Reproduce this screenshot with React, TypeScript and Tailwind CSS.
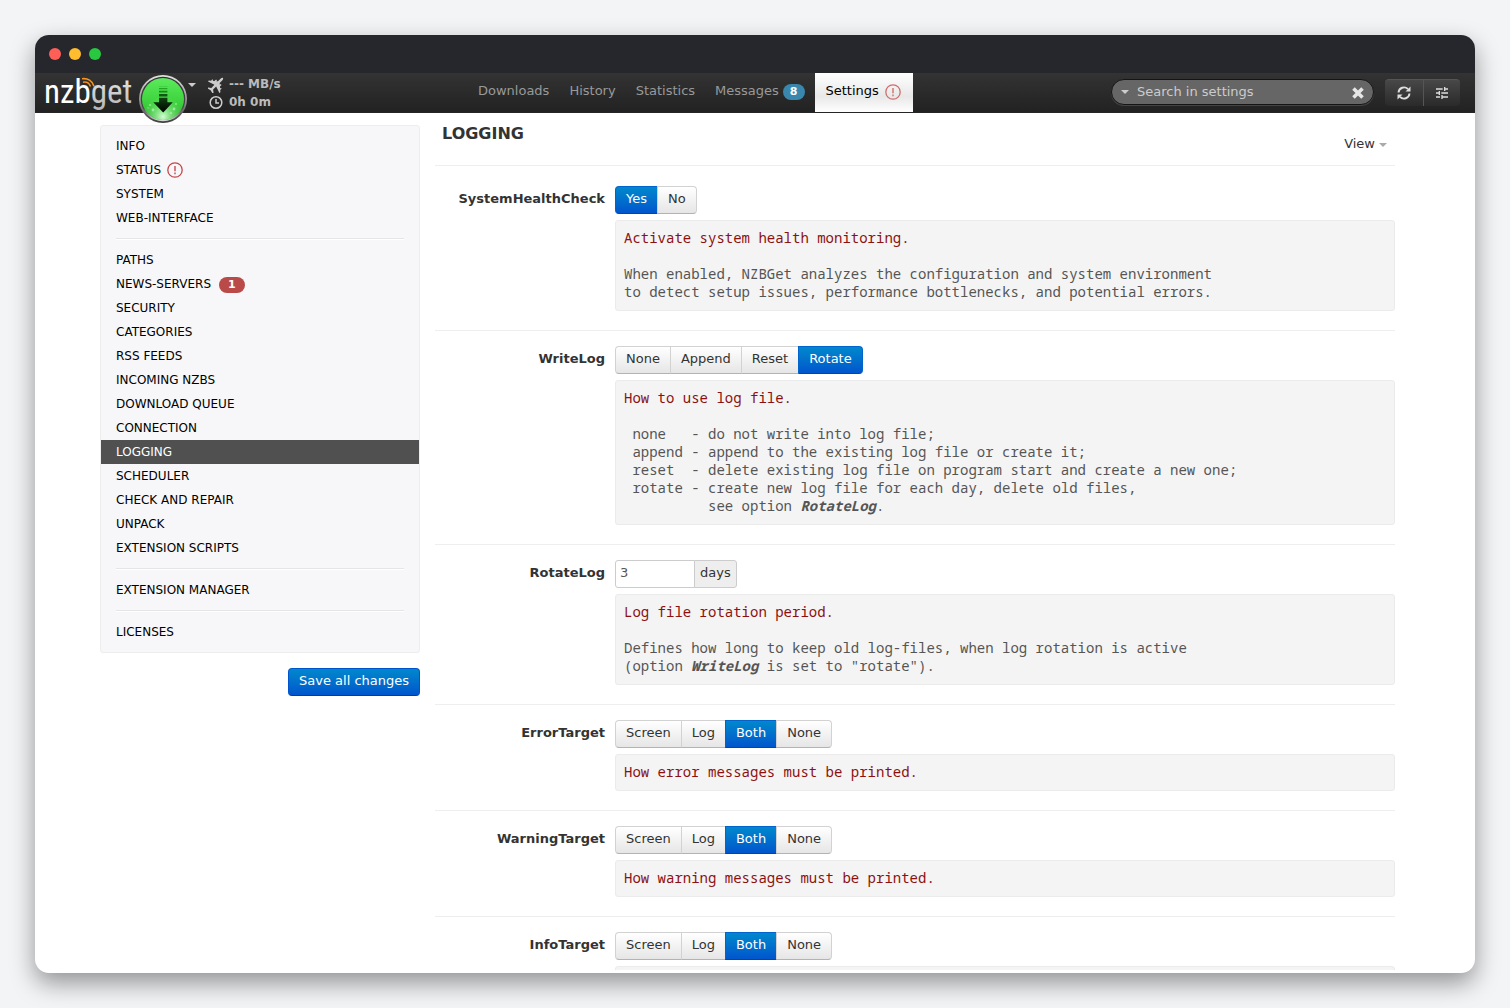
import { ReactNode } from "react";
import { MdTune } from "react-icons/md";

function Warn({ className, faded }: { className?: string; faded?: boolean }) {
  return (
    <svg viewBox="0 0 16 16" className={"size-4 shrink-0 " + (className ?? "")} fill="none" stroke={faded ? "#cf6d6b" : "#c4474a"} aria-label="Warning">
      <circle cx="8" cy="8" r="7.2" strokeWidth="1.3" />
      <path d="M8 4v5.2M8 10.6v1.6" strokeWidth="1.4" />
    </svg>
  );
}

function Caret({ className }: { className?: string }) {
  return (
    <svg viewBox="0 0 8 4" className={"h-1 w-2 shrink-0 " + (className ?? "")} fill="currentColor" aria-hidden="true">
      <path d="M0 0h8L4 4z" />
    </svg>
  );
}

function Logo() {
  return (
    <svg viewBox="0 0 92 40" className="h-10 w-[92px] shrink-0" role="img" aria-label="nzbget">
      <defs>
        <linearGradient id="get" x1="0" y1="0" x2="0" y2="1">
          <stop offset="0" stopColor="#ededed" />
          <stop offset="1" stopColor="#b4b4b4" />
        </linearGradient>
      </defs>
      <text x="-1" y="30" fontFamily="'Roboto Condensed', Roboto, sans-serif" fontSize="33">
        <tspan fill="#fff">nzb</tspan>
        <tspan fill="url(#get)">get</tspan>
      </text>
      <g fill="none" stroke="#f7941d" strokeWidth="1.6">
        <path d="M37 5.800C42.500 4.800 47.500 8 49 13.200" />
        <path d="M38 9.200C41.500 8.600 44.500 10.500 45.500 13.600" />
      </g>
    </svg>
  );
}

function DownloadOrb() {
  return (
    <svg viewBox="0 0 48 48" className="size-12" aria-hidden="true">
      <defs>
        <linearGradient id="rim" x1="0" y1="0" x2="0" y2="1">
          <stop offset="0" stopColor="#e2e2e2" />
          <stop offset="0.5" stopColor="#9a9a9a" />
          <stop offset="1" stopColor="#3c3c3c" />
        </linearGradient>
        <linearGradient id="inner" x1="0" y1="0" x2="0" y2="1">
          <stop offset="0" stopColor="#2f2f2f" />
          <stop offset="0.7" stopColor="#4a4a4a" />
          <stop offset="1" stopColor="#e0e0e0" />
        </linearGradient>
        <linearGradient id="orb" x1="0" y1="0" x2="0" y2="1">
          <stop offset="0" stopColor="#5bea5b" />
          <stop offset="0.55" stopColor="#3fd43f" />
          <stop offset="1" stopColor="#2fae2f" />
        </linearGradient>
        <radialGradient id="glow" cx="0.5" cy="0.92" r="0.5">
          <stop offset="0" stopColor="#d2ffd2" />
          <stop offset="1" stopColor="#5fe05f" stopOpacity="0" />
        </radialGradient>
        <linearGradient id="arrow" x1="0" y1="0" x2="0" y2="1">
          <stop offset="0" stopColor="#0f4210" />
          <stop offset="1" stopColor="#000" />
        </linearGradient>
      </defs>
      <circle cx="24" cy="24" r="24" fill="url(#rim)" />
      <circle cx="24" cy="24" r="22.300" fill="url(#inner)" />
      <circle cx="24" cy="24" r="21" fill="url(#orb)" />
      <circle cx="24" cy="24" r="21" fill="url(#glow)" />
      <g fill="#c4ffc4" opacity="0.6">
        <circle cx="11" cy="30" r="1" />
        <circle cx="14" cy="35" r="1.400" />
        <circle cx="9" cy="33" r="0.700" />
        <circle cx="35" cy="34" r="1.400" />
        <circle cx="37" cy="29" r="0.900" />
        <circle cx="32" cy="38" r="1" />
      </g>
      <path d="M20 22.800h8.400v4.500h5.400L24.200 37.600 14.300 27.300H20z" fill="url(#arrow)" />
      <path d="M20 19h8.400v2.600H20z" fill="#0f5a11" />
      <path d="M20 15.700h8.400v1.900H20z" fill="#178a19" />
      <path d="M20 13h8.400v1.200H20z" fill="#22a624" />
      <path d="M20 10.900h8.400v.700H20z" fill="#35c437" />
    </svg>
  );
}

function Nav() {
  const item = "flex h-[39px] items-center px-[10px] pb-[3px] text-[#999] ";
  return (
    <nav className="flex text-[13px]">
      <a href="#downloads" className={item}>Downloads</a>
      <a href="#history" className={item}>History</a>
      <a href="#statistics" className={item}>Statistics</a>
      <a href="#messages" className={item}>
        Messages
        <span className="mt-[2px] ml-1 rounded-full bg-[#3a87ad] px-[7px] text-[11px] leading-4 font-bold text-white">8</span>
      </a>
      <a href="#settings" className="flex h-[39px] items-center bg-linear-to-b from-white via-[#e8e8e8] via-60% to-white pr-3 pb-[3px] pl-[11px] text-black">
        Settings
        <Warn faded className="mt-[2px] ml-[6px]" />
      </a>
    </nav>
  );
}

function Header() {
  const tool = "flex h-[27px] items-center justify-center border-t border-[#555] bg-linear-to-b from-[#484848] to-[#2a2a2a] text-[#ddd] ";
  return (
    <header className="relative flex h-10 shrink-0 border-b border-[#252525] bg-linear-to-b from-[#333] to-[#222] px-[10px]">
      <div className="flex w-[423px] shrink-0">
        <Logo />
        <button type="button" aria-label="Pause downloads" className="z-10 mt-[2px] ml-[2px] h-12">
          <DownloadOrb />
        </button>
        <Caret className="mt-[10px] ml-[1px] text-[#ccc]" />
        <div className="mt-[2px] ml-3 text-[12px] leading-[18px] font-bold text-[#bbb]">
          <div className="flex items-center gap-[5px]">
            <svg viewBox="0 0 16 16" className="mt-[2px] size-4" fill="#ccc" aria-hidden="true">
              <path transform="rotate(45 8 8)" d="M8-1.800c.8 0 1.200 1.200 1.200 2.600V4l1.300 1.100V4h1.400v2.300L13.300 7.500V6.500h1.200v2l1.700 1.500v1.300L9.200 9v4.300l2.600 2v1.200L8 15.600l-3.800.900v-1.200l2.600-2V9l-7 2.300V10l1.700-1.500v-2h1.200v1l1.400-1.200V4h1.400v1.100L6.800 4V.8c0-1.400.4-2.600 1.200-2.600z" />
            </svg>
            <span>--- MB/s</span>
          </div>
          <div className="flex items-center gap-[5px]">
            <svg viewBox="0 0 16 16" className="size-4" fill="none" stroke="#ccc" strokeWidth="1.500" aria-hidden="true">
              <circle cx="8" cy="8.500" r="5.800" />
              <path d="M8 5v4h3" />
            </svg>
            <span>0h 0m</span>
          </div>
        </div>
      </div>
      <Nav />
      <div className="mr-[5px] ml-auto flex items-start gap-[11px] pt-[6px]">
        <div className="flex h-[26px] w-[263px] items-center rounded-full border border-[#151515] bg-[#666] px-[9px] pb-[1px] text-[#ccc] shadow-[0_1px_0_#444]">
          <button type="button" aria-label="Search options"><Caret /></button>
          <input aria-label="Search in settings" placeholder="Search in settings" className="ml-2 min-w-0 flex-1 bg-transparent text-[13px] outline-none placeholder:text-[#ccc]" />
          <button type="button" aria-label="Clear search">
            <svg viewBox="0 0 12 12" className="mt-[2px] size-3" stroke="#e6e6e6" strokeWidth="3.600" aria-hidden="true">
              <path d="M1.500 1.500l9 9M10.500 1.500l-9 9" />
            </svg>
          </button>
        </div>
        <div className="flex">
          <button type="button" aria-label="Refresh" className={tool + "w-[39px] rounded-l border-r"}>
            <svg viewBox="0 0 14 14" className="size-[14px]" fill="none" stroke="currentColor" strokeWidth="1.900" aria-hidden="true">
              <path d="M1.500 6.500A5.500 5.500 0 0 1 11 3.200M12.500 7.500A5.500 5.500 0 0 1 3 10.800" />
              <path d="M13.500.500v5h-5zM.500 13.500v-5h5z" fill="currentColor" stroke="none" />
            </svg>
          </button>
          <button type="button" aria-label="Options" className={tool + "w-9 rounded-r"}>
            <MdTune className="size-4" />
          </button>
        </div>
      </div>
    </header>
  );
}

const groups = [
  ["INFO", "STATUS", "SYSTEM", "WEB-INTERFACE"],
  ["PATHS", "NEWS-SERVERS", "SECURITY", "CATEGORIES", "RSS FEEDS", "INCOMING NZBS", "DOWNLOAD QUEUE", "CONNECTION", "LOGGING", "SCHEDULER", "CHECK AND REPAIR", "UNPACK", "EXTENSION SCRIPTS"],
  ["EXTENSION MANAGER"],
  ["LICENSES"],
];

function Sidebar() {
  return (
    <aside className="flex w-80 shrink-0 flex-col items-end pt-3">
      <nav className="w-full rounded-[3px] border border-[#ededee] bg-[#f7f7f9] py-2 text-[12px]">
        {groups.map((g, i) => (
          <div key={i}>
            {i > 0 && <hr className="mx-[15px] my-2 h-[2px] border-t border-b border-t-[#e5e5e5] border-b-white" />}
            {g.map((t) => (
              <a key={t} href={"#" + t} className={"flex h-6 items-center px-[15px] " + (t === "LOGGING" ? "bg-[#505050] text-white" : "text-black")}>
                {t}
                {t === "STATUS" && <Warn className="ml-[6px]" />}
                {t === "NEWS-SERVERS" && (
                  <span className="mt-[2px] ml-2 rounded-full bg-[#b94a48] px-[9px] text-[11px] leading-4 font-bold text-white">1</span>
                )}
              </a>
            ))}
          </div>
        ))}
      </nav>
      <button type="button" className="mt-[15px] h-7 rounded border border-[#0055cc] border-b-[#003c9e] bg-linear-to-b from-[#0088cc] to-[#0055cc] px-[10px] pb-[2px] text-white">
        Save all changes
      </button>
    </aside>
  );
}

function Choice({ name, options, value }: { name: string; options: string[]; value: string }) {
  return (
    <div role="group" aria-labelledby={name + "-label"} className="flex">
      {options.map((o) => (
        <button
          key={o}
          type="button"
          aria-pressed={o === value}
          className={
            "-ml-px h-7 border px-[10px] pb-[2px] first:ml-0 first:rounded-l last:rounded-r " +
            (o === value
              ? "border-[#0064cc] border-b-[#0044b0] bg-linear-to-b from-[#0088cc] to-[#0055cc] text-white"
              : "border-[#d2d2d2] border-b-[#b3b3b3] bg-linear-to-b from-white to-[#e6e6e6]")
          }
        >
          {o}
        </button>
      ))}
    </div>
  );
}

function Option({ name, control, title, children }: { name: string; control: ReactNode; title: string; children?: ReactNode }) {
  return (
    <section className="flex gap-[10px] border-t border-[#eee] pt-[15px] pb-[19px] first:border-t-0 first:pt-5">
      <label id={name + "-label"} htmlFor={name} className="w-[170px] shrink-0 pt-1 text-right leading-[18px] font-bold">{name}</label>
      <div className="min-w-0 flex-1">
        {control}
        <div className="mt-[6px] rounded-[3px] border border-[#ebebeb] bg-[#f4f4f4] px-2 pt-2 pb-[9px] font-['Noto_Sans_Mono','DejaVu_Sans_Mono',monospace] text-[14px] leading-[18px] whitespace-pre-wrap text-[#555]">
          <p className="text-[#8b1010]">{title}</p>
          {children && <p className="mt-[18px]">{children}</p>}
        </div>
      </div>
    </section>
  );
}

const targets = ["Screen", "Log", "Both", "None"];

export default function App() {
  return (
    <div className="flex h-screen flex-col bg-[#f3f4f6] p-[35px] font-['DejaVu_Sans',sans-serif] text-[13px] text-[#333]">
      <div className="flex min-h-0 flex-1 flex-col overflow-hidden rounded-[14px] bg-white shadow-[0_10px_24px_rgba(0,0,0,0.4)]">
        <div className="flex h-[38px] shrink-0 items-center gap-2 bg-[#26272c] px-[14px]">
          <span className="size-3 rounded-full bg-[#ff5f57]" />
          <span className="size-3 rounded-full bg-[#febc2e]" />
          <span className="size-3 rounded-full bg-[#28c840]" />
        </div>
        <Header />
        <div className="mb-[3px] flex min-h-0 flex-1 gap-[15px] overflow-hidden pr-20 pl-[65px]">
          <Sidebar />
          <main className="min-w-0 flex-1">
            <div className="flex h-[53px] justify-between border-b border-[#eee] pr-2 pl-[7px]">
              <h1 className="pt-[11px] text-[16px] leading-5 font-bold">LOGGING</h1>
              <button type="button" className="mt-[22px] flex h-[18px] items-center gap-1">
                View <Caret className="mt-[2px] text-[#aaa]" />
              </button>
            </div>
            <div>
              <Option name="SystemHealthCheck" title="Activate system health monitoring." control={<Choice name="SystemHealthCheck" options={["Yes", "No"]} value="Yes" />}>
                {"When enabled, NZBGet analyzes the configuration and system environment\nto detect setup issues, performance bottlenecks, and potential errors."}
              </Option>
              <Option name="WriteLog" title="How to use log file." control={<Choice name="WriteLog" options={["None", "Append", "Reset", "Rotate"]} value="Rotate" />}>
                {" none   - do not write into log file;\n append - append to the existing log file or create it;\n reset  - delete existing log file on program start and create a new one;\n rotate - create new log file for each day, delete old files,\n          see option "}
                <strong className="italic">RotateLog</strong>.
              </Option>
              <Option
                name="RotateLog"
                title="Log file rotation period."
                control={
                  <div className="flex h-7">
                    <input id="RotateLog" defaultValue="3" className="w-20 rounded-l-[3px] border border-[#ccc] px-1 pb-[2px] text-[#555]" />
                    <span className="-ml-px rounded-r-[3px] border border-[#ccc] bg-[#eee] px-[5px] pt-[3px] leading-[18px]">days</span>
                  </div>
                }
              >
                {"Defines how long to keep old log-files, when log rotation is active\n(option "}
                <strong className="italic">WriteLog</strong>
                {' is set to "rotate").'}
              </Option>
              <Option name="ErrorTarget" title="How error messages must be printed." control={<Choice name="ErrorTarget" options={targets} value="Both" />} />
              <Option name="WarningTarget" title="How warning messages must be printed." control={<Choice name="WarningTarget" options={targets} value="Both" />} />
              <Option name="InfoTarget" title="How info messages must be printed." control={<Choice name="InfoTarget" options={targets} value="Both" />} />
            </div>
          </main>
        </div>
      </div>
    </div>
  );
}
